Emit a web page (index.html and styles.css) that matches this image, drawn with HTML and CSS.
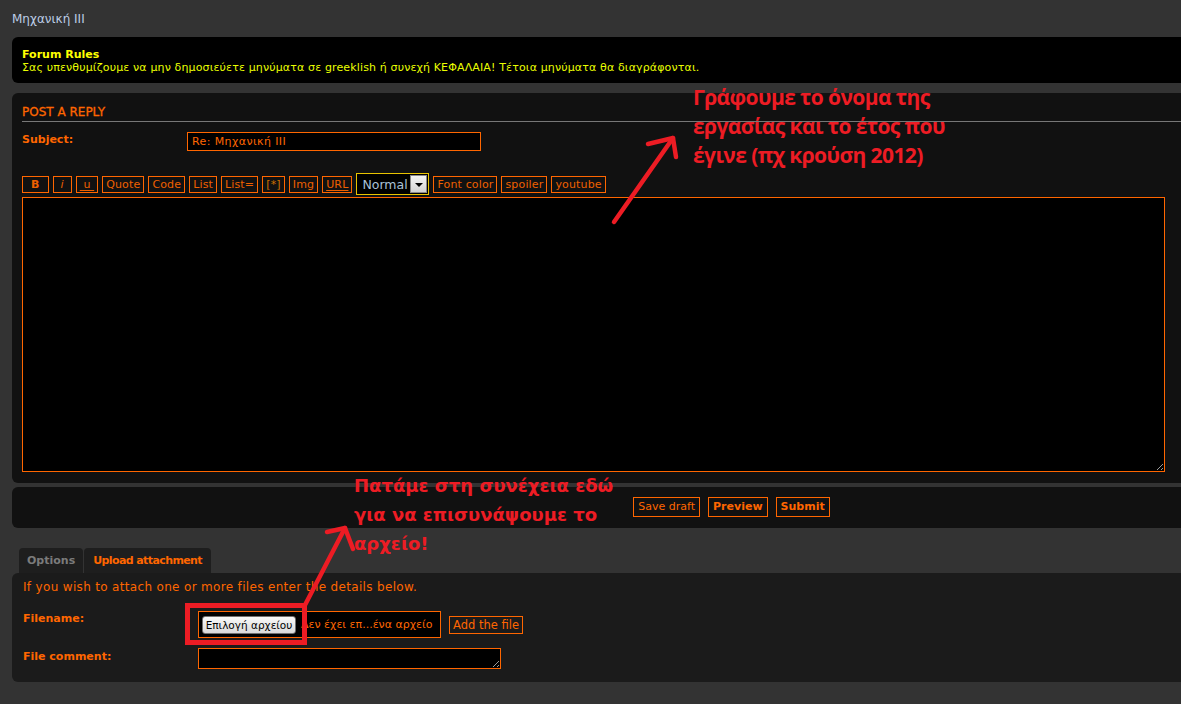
FILE: index.html
```html
<!DOCTYPE html>
<html lang="el">
<head>
<meta charset="utf-8">
<title>Μηχανική ΙΙΙ - Post a reply</title>
<link rel="stylesheet" href="styles.css">
</head>
<body>
<div class="page">
  <h2 class="topic-title">Μηχανική ΙΙΙ</h2>

  <div class="rules">
    <strong>Forum Rules</strong>
    <p>Σας υπενθυμίζουμε να μην δημοσιεύετε μηνύματα σε greeklish ή συνεχή ΚΕΦΑΛΑΙΑ! Τέτοια μηνύματα θα διαγράφονται.</p>
  </div>

  <div class="panel post">
    <h3>POST A REPLY</h3>
    <div class="row subject">
      <label class="lbl">Subject:</label>
      <input class="inputbox" type="text" value="Re: Μηχανική ΙΙΙ">
    </div>
    <div class="toolbar">
      <span class="bb b-bold">B</span>
      <span class="bb b-ital">i</span>
      <span class="bb b-und"><u>&nbsp;u&nbsp;</u></span>
      <span class="bb">Quote</span>
      <span class="bb">Code</span>
      <span class="bb">List</span>
      <span class="bb">List=</span>
      <span class="bb b-star">[*]</span>
      <span class="bb">Img</span>
      <span class="bb"><u>URL</u></span>
      <span class="fontsize"><span class="fs-val">Normal</span><span class="fs-arrow"><i></i></span></span>
      <span class="bb">Font color</span>
      <span class="bb">spoiler</span>
      <span class="bb">youtube</span>
    </div>
    <textarea class="message"></textarea>
  </div>

  <div class="panel submit-bar">
    <span class="btn">Save draft</span>
    <span class="btn strong">Preview</span>
    <span class="btn strong">Submit</span>
  </div>

  <ul class="tabs">
    <li class="tab">Options</li>
    <li class="tab active">Upload attachment</li>
  </ul>

  <div class="panel attach">
    <p class="hint">If you wish to attach one or more files enter the details below.</p>
    <div class="row file-row">
      <label class="lbl">Filename:</label>
      <div class="filebox">
        <span class="choose">Επιλογή αρχείου</span>
        <span class="nofile">Δεν έχει επ...ένα αρχείο</span>
      </div>
      <span class="addfile">Add the file</span>
    </div>
    <div class="row comment-row">
      <label class="lbl">File comment:</label>
      <textarea class="comment"></textarea>
    </div>
  </div>
</div>

<svg class="marks" width="1181" height="704" viewBox="0 0 1181 704" aria-hidden="true">
  <g fill="none" stroke="#ed1c24" stroke-linecap="round" stroke-linejoin="round">
    <line x1="614" y1="222" x2="673" y2="138" stroke-width="4.5"/>
    <polyline points="648,144 673,138 676,157" stroke-width="4.5"/>
    <line x1="305" y1="605" x2="345" y2="528" stroke-width="4.5"/>
    <polyline points="327,532 345,528 353,549" stroke-width="4.5"/>
    <rect x="187.5" y="605.5" width="117" height="37" stroke-width="5" stroke-linecap="butt" stroke-linejoin="miter"/>
  </g>
</svg>

<div class="note note-top">Γράφουμε το όνομα της<br>εργασίας και το έτος που<br>έγινε (πχ κρούση 2012)</div>
<div class="note note-bottom">Πατάμε στη συνέχεια εδώ<br>για να επισυνάψουμε το<br>αρχείο!</div>
</body>
</html>
```

FILE: styles.css
```css
html, body {
  margin: 0;
  height: 704px;
}
body {
  background: #333333;
  font-family: "DejaVu Sans", Verdana, sans-serif;
  color: #ff6600;
  overflow: hidden;
  position: relative;
}
.page {
  width: 1439px;
  padding: 10px 0 0 12px;
}
.topic-title {
  margin: 0;
  font-size: 12px;
  line-height: 18px;
  font-weight: normal;
  color: #bccde6;
}

/* forum rules */
.rules {
  margin-top: 9px;
  background: #000;
  border-radius: 6px;
  padding: 11px 10px 9px;
  font-size: 11px;
  line-height: 13px;
  color: #ffff00;
}
.rules strong { display: block; }
.rules p { margin: 0; color: #eaff00; letter-spacing: 0.14px; }

.panel {
  background: #111111;
  border-radius: 6px;
}

/* post a reply */
.post {
  margin-top: 10px;
  padding: 11px 10px 11px 10px;
}
.post h3 {
  margin: 0;
  font-size: 12px;
  line-height: 16px;
  font-weight: normal;
  color: #ff6600;
  border-bottom: 1px solid #777;
  padding-bottom: 1px;
  -webkit-text-stroke: 0.3px #ff6600;
}
.row {
  display: flex;
  align-items: flex-start;
}
.lbl {
  font-size: 11px;
  line-height: 13px;
  font-weight: bold;
  color: #ff6600;
}
.subject { margin-top: 10px; }
.subject .lbl { width: 165px; padding-top: 1px; }
.inputbox {
  box-sizing: border-box;
  width: 294px;
  height: 19px;
  margin: 0;
  border: 1px solid #ff6600;
  background: #000;
  color: #ff6600;
  font-family: "DejaVu Sans", Verdana, sans-serif;
  font-size: 11px;
  letter-spacing: 0.4px;
  padding: 0 4px;
  outline: none;
}

.toolbar {
  margin-top: 22px;
  height: 22px;
  display: flex;
  align-items: center;
  gap: 4px;
}
.bb {
  box-sizing: border-box;
  height: 17px;
  line-height: 15px;
  font-size: 11px;
  letter-spacing: 0.15px;
  border: 1px solid #ff6600;
  color: #ee6000;
  padding: 0 3px;
  white-space: nowrap;
}
.bb u { text-decoration: underline; text-underline-offset: 2px; }
.b-bold { font-weight: bold; padding: 0 8px; }
.b-ital { font-style: italic; padding: 0 7px; }
.b-und { padding: 0 3px; }
.b-star { color: #d07000; }

.fontsize {
  box-sizing: border-box;
  width: 73px;
  height: 22px;
  border: 1px solid #e8c300;
  background: #000;
  display: flex;
  align-items: center;
  justify-content: space-between;
  padding: 0 1px 0 5px;
}
.fs-val {
  font-size: 12.5px;
  color: #a9c0d8;
}
.fs-arrow {
  box-sizing: border-box;
  width: 17px;
  height: 18px;
  border: 1px solid #8a8a8a;
  background: linear-gradient(#f4f4f4, #d2d2d2);
  display: flex;
  align-items: center;
  justify-content: center;
}
.fs-arrow i {
  width: 0;
  height: 0;
  border-left: 4px solid transparent;
  border-right: 4px solid transparent;
  border-top: 4px solid #000;
  margin-top: 1px;
}

.message {
  display: block;
  box-sizing: border-box;
  margin: 2px 0 0;
  width: 1143px;
  height: 275px;
  border: 1px solid #ff6600;
  background: #000;
  color: #ff6600;
  outline: none;
}

/* submit bar */
.submit-bar {
  margin-top: 4px;
  padding: 10px 0 11px;
  display: flex;
  justify-content: center;
  gap: 8px;
}
.btn {
  box-sizing: border-box;
  height: 20px;
  line-height: 18px;
  font-size: 11px;
  border: 1px solid #ff6600;
  color: #ff6600;
  padding: 0 4px;
}
.btn.strong { font-weight: bold; }

/* tabs */
.tabs {
  list-style: none;
  margin: 20px 0 0;
  padding: 0 0 0 7px;
  display: flex;
  gap: 1px;
  height: 25px;
}
.tab {
  background: #1e1e1e;
  border-radius: 4px 4px 0 0;
  font-size: 11px;
  font-weight: bold;
  line-height: 25px;
  padding: 0 8px;
  color: #7b7b7b;
}
.tab.active { color: #ff6600; padding: 0 9px; letter-spacing: -0.6px; }

/* attachments */
.attach {
  background: #1b1b1b;
  padding: 6px 10px 13px 11px;
}
.hint {
  margin: 0;
  font-size: 12px;
  line-height: 16px;
  letter-spacing: 0.33px;
  color: #ff6600;
}
.file-row { margin-top: 16px; align-items: center; }
.file-row .lbl { width: 175px; align-self: flex-start; padding-top: 1px; }
.filebox {
  box-sizing: border-box;
  width: 243px;
  height: 27px;
  border: 1px solid #ff6600;
  background: #000;
  display: flex;
  align-items: center;
  padding-left: 3px;
  overflow: hidden;
  white-space: nowrap;
}
.choose {
  box-sizing: border-box;
  flex: none;
  width: 94px;
  height: 18px;
  line-height: 16px;
  text-align: center;
  border: 1px solid #707070;
  border-radius: 3px;
  background: linear-gradient(#f8f8f8, #dadada);
  color: #000;
  font-size: 10.5px;
}
.nofile {
  margin-left: 5px;
  font-size: 11px;
  color: #ff6600;
}
.addfile {
  box-sizing: border-box;
  margin-left: 8px;
  height: 18px;
  line-height: 16px;
  border: 1px solid #ff6600;
  color: #ff6600;
  font-size: 11.5px;
  padding: 0 3px;
}
.comment-row { margin-top: 10px; }
.comment-row .lbl { width: 175px; padding-top: 2px; }
.comment {
  display: block;
  box-sizing: border-box;
  margin: 0;
  width: 303px;
  height: 21px;
  border: 1px solid #ff6600;
  background: #000;
  outline: none;
}

/* annotations drawn over the screenshot */
.marks {
  position: absolute;
  left: 0;
  top: 0;
  pointer-events: none;
}
.note {
  position: absolute;
  color: #ed1c24;
  font-weight: bold;
  white-space: nowrap;
  pointer-events: none;
}
.note-top {
  left: 693px;
  top: 83px;
  font-family: "Open Sans", "Noto Sans", sans-serif;
  font-size: 21px;
  line-height: 29px;
  letter-spacing: -0.6px;
}
.note-bottom {
  left: 354px;
  top: 471px;
  font-family: "DejaVu Sans", Verdana, sans-serif;
  font-size: 18px;
  line-height: 29px;
}
```
